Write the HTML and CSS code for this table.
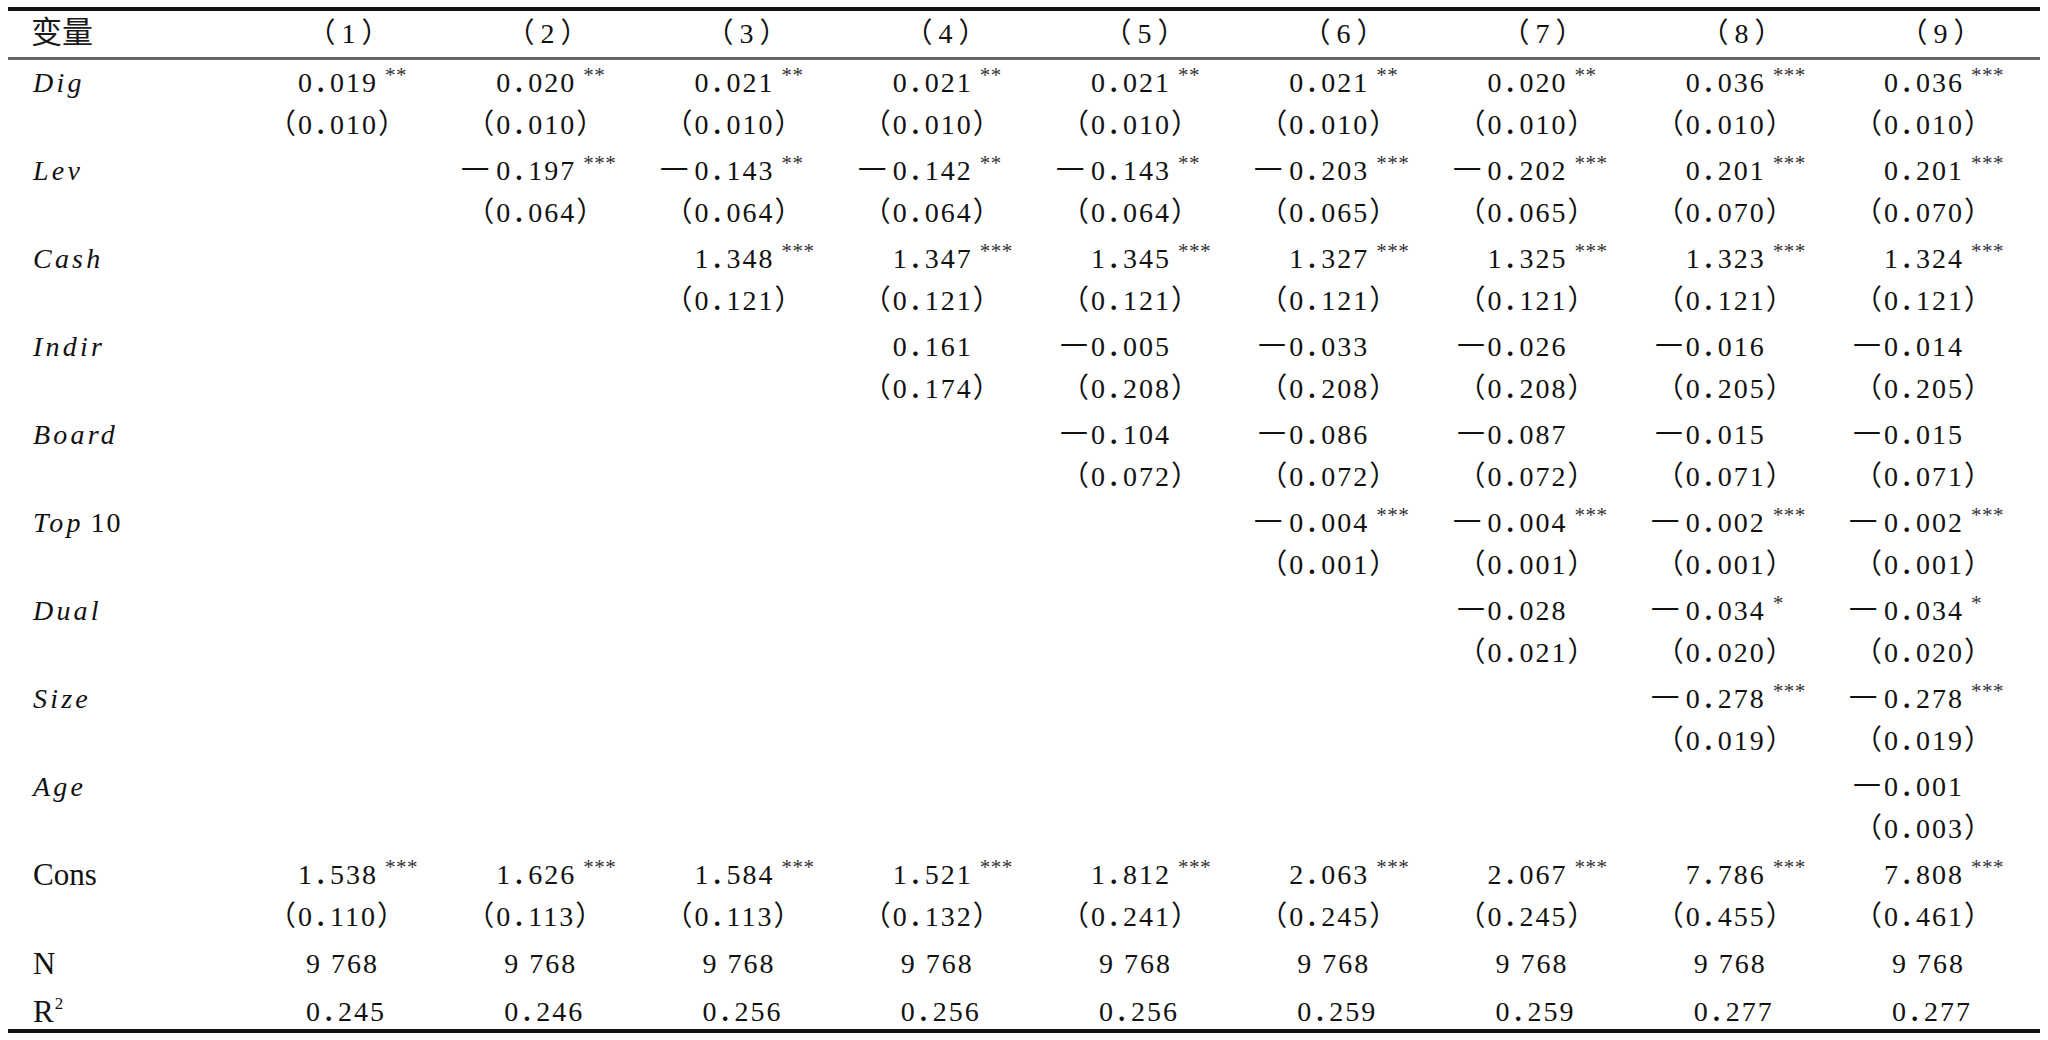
FILE: index.html
```html
<!DOCTYPE html>
<html lang="zh-CN">
<head>
<meta charset="utf-8">
<title>回归结果</title>
<link rel="stylesheet" href="styles.css">
</head>
<body>
<table class="reg">
<colgroup>
<col class="c-lab">
<col class="c-num"><col class="c-num"><col class="c-num"><col class="c-num"><col class="c-num"><col class="c-num"><col class="c-num"><col class="c-num"><col class="c-num">
</colgroup>
<thead>
<tr>
<th class="lab">变量</th>
<th>（1）</th><th>（2）</th><th>（3）</th><th>（4）</th><th>（5）</th><th>（6）</th><th>（7）</th><th>（8）</th><th>（9）</th>
</tr>
</thead>
<tbody>
<tr class="c">
<td class="lab"><i>Dig</i></td>
<td>0．019<sup>**</sup></td><td>0．020<sup>**</sup></td><td>0．021<sup>**</sup></td><td>0．021<sup>**</sup></td><td>0．021<sup>**</sup></td><td>0．021<sup>**</sup></td><td>0．020<sup>**</sup></td><td>0．036<sup>***</sup></td><td>0．036<sup>***</sup></td>
</tr>
<tr class="s">
<td class="lab"></td>
<td>（0．010）</td><td>（0．010）</td><td>（0．010）</td><td>（0．010）</td><td>（0．010）</td><td>（0．010）</td><td>（0．010）</td><td>（0．010）</td><td>（0．010）</td>
</tr>
<tr class="c">
<td class="lab"><i>Lev</i></td>
<td></td><td class="m"><span class="sg">－</span>0．197<sup>***</sup></td><td class="m"><span class="sg">－</span>0．143<sup>**</sup></td><td class="m"><span class="sg">－</span>0．142<sup>**</sup></td><td class="m"><span class="sg">－</span>0．143<sup>**</sup></td><td class="m"><span class="sg">－</span>0．203<sup>***</sup></td><td class="m"><span class="sg">－</span>0．202<sup>***</sup></td><td>0．201<sup>***</sup></td><td>0．201<sup>***</sup></td>
</tr>
<tr class="s">
<td class="lab"></td>
<td></td><td>（0．064）</td><td>（0．064）</td><td>（0．064）</td><td>（0．064）</td><td>（0．065）</td><td>（0．065）</td><td>（0．070）</td><td>（0．070）</td>
</tr>
<tr class="c">
<td class="lab"><i>Cash</i></td>
<td></td><td></td><td>1．348<sup>***</sup></td><td>1．347<sup>***</sup></td><td>1．345<sup>***</sup></td><td>1．327<sup>***</sup></td><td>1．325<sup>***</sup></td><td>1．323<sup>***</sup></td><td>1．324<sup>***</sup></td>
</tr>
<tr class="s">
<td class="lab"></td>
<td></td><td></td><td>（0．121）</td><td>（0．121）</td><td>（0．121）</td><td>（0．121）</td><td>（0．121）</td><td>（0．121）</td><td>（0．121）</td>
</tr>
<tr class="c">
<td class="lab"><i>Indir</i></td>
<td></td><td></td><td></td><td>0．161</td><td class="m"><span class="sg">－</span>0．005</td><td class="m"><span class="sg">－</span>0．033</td><td class="m"><span class="sg">－</span>0．026</td><td class="m"><span class="sg">－</span>0．016</td><td class="m"><span class="sg">－</span>0．014</td>
</tr>
<tr class="s">
<td class="lab"></td>
<td></td><td></td><td></td><td>（0．174）</td><td>（0．208）</td><td>（0．208）</td><td>（0．208）</td><td>（0．205）</td><td>（0．205）</td>
</tr>
<tr class="c">
<td class="lab"><i>Board</i></td>
<td></td><td></td><td></td><td></td><td class="m"><span class="sg">－</span>0．104</td><td class="m"><span class="sg">－</span>0．086</td><td class="m"><span class="sg">－</span>0．087</td><td class="m"><span class="sg">－</span>0．015</td><td class="m"><span class="sg">－</span>0．015</td>
</tr>
<tr class="s">
<td class="lab"></td>
<td></td><td></td><td></td><td></td><td>（0．072）</td><td>（0．072）</td><td>（0．072）</td><td>（0．071）</td><td>（0．071）</td>
</tr>
<tr class="c">
<td class="lab"><i class="tp">Top</i>10</td>
<td></td><td></td><td></td><td></td><td></td><td class="m"><span class="sg">－</span>0．004<sup>***</sup></td><td class="m"><span class="sg">－</span>0．004<sup>***</sup></td><td class="m"><span class="sg">－</span>0．002<sup>***</sup></td><td class="m"><span class="sg">－</span>0．002<sup>***</sup></td>
</tr>
<tr class="s">
<td class="lab"></td>
<td></td><td></td><td></td><td></td><td></td><td>（0．001）</td><td>（0．001）</td><td>（0．001）</td><td>（0．001）</td>
</tr>
<tr class="c">
<td class="lab"><i>Dual</i></td>
<td></td><td></td><td></td><td></td><td></td><td></td><td class="m"><span class="sg">－</span>0．028</td><td class="m"><span class="sg">－</span>0．034<sup>*</sup></td><td class="m"><span class="sg">－</span>0．034<sup>*</sup></td>
</tr>
<tr class="s">
<td class="lab"></td>
<td></td><td></td><td></td><td></td><td></td><td></td><td>（0．021）</td><td>（0．020）</td><td>（0．020）</td>
</tr>
<tr class="c">
<td class="lab"><i>Size</i></td>
<td></td><td></td><td></td><td></td><td></td><td></td><td></td><td class="m"><span class="sg">－</span>0．278<sup>***</sup></td><td class="m"><span class="sg">－</span>0．278<sup>***</sup></td>
</tr>
<tr class="s">
<td class="lab"></td>
<td></td><td></td><td></td><td></td><td></td><td></td><td></td><td>（0．019）</td><td>（0．019）</td>
</tr>
<tr class="c">
<td class="lab"><i>Age</i></td>
<td></td><td></td><td></td><td></td><td></td><td></td><td></td><td></td><td class="m"><span class="sg">－</span>0．001</td>
</tr>
<tr class="s">
<td class="lab"></td>
<td></td><td></td><td></td><td></td><td></td><td></td><td></td><td></td><td>（0．003）</td>
</tr>
<tr class="c">
<td class="lab up">Cons</td>
<td>1．538<sup>***</sup></td><td>1．626<sup>***</sup></td><td>1．584<sup>***</sup></td><td>1．521<sup>***</sup></td><td>1．812<sup>***</sup></td><td>2．063<sup>***</sup></td><td>2．067<sup>***</sup></td><td>7．786<sup>***</sup></td><td>7．808<sup>***</sup></td>
</tr>
<tr class="s">
<td class="lab"></td>
<td>（0．110）</td><td>（0．113）</td><td>（0．113）</td><td>（0．132）</td><td>（0．241）</td><td>（0．245）</td><td>（0．245）</td><td>（0．455）</td><td>（0．461）</td>
</tr>
<tr class="n">
<td class="lab up">N</td>
<td>9 768</td><td>9 768</td><td>9 768</td><td>9 768</td><td>9 768</td><td>9 768</td><td>9 768</td><td>9 768</td><td>9 768</td>
</tr>
<tr class="r">
<td class="lab up">R<sup class="pw">2</sup></td>
<td>0．245</td><td>0．246</td><td>0．256</td><td>0．256</td><td>0．256</td><td>0．259</td><td>0．259</td><td>0．277</td><td>0．277</td>
</tr>
</tbody>
</table>
</body>
</html>
```
FILE: styles.css
```css
html, body {
  margin: 0;
  padding: 0;
  background: #ffffff;
}

body {
  padding: 7px 8px 0;
  overflow: hidden;
}

.reg {
  width: 2032px;
  table-layout: fixed;
  border-collapse: separate;
  border-spacing: 0;
  border-top: 4px solid #111111;
  border-bottom: 4px solid #111111;
  font-family: "Liberation Serif", "Noto Sans CJK SC", serif;
  font-size: 28px;
  color: #111111;
  font-feature-settings: "halt" 1;
  text-spacing-trim: space-all;
}

.c-lab { width: 241px; }
.c-num { width: 199px; }

.reg th,
.reg td {
  padding: 0;
  white-space: nowrap;
  font-weight: normal;
}

/* header */
.reg thead th {
  line-height: 46px;
  border-bottom: 3px solid #666666;
  text-align: center;
  letter-spacing: 6px;
  padding-left: 6px;
}

.reg thead th.lab {
  text-align: left;
  font-family: "Noto Sans CJK SC", sans-serif;
  font-size: 31px;
  letter-spacing: 0;
  line-height: 37px;
  padding: 0 0 9px 23px;
  color: #1a1a1a;
}

/* body cells: numbers share one decimal position per column */
.reg tbody td { --x: 49px; }
.reg tbody td:nth-child(3) { --x: 48.25px; }
.reg tbody td:nth-child(4) { --x: 47.5px; }
.reg tbody td:nth-child(5) { --x: 46.75px; }
.reg tbody td:nth-child(6) { --x: 46px; }
.reg tbody td:nth-child(7) { --x: 45.25px; }
.reg tbody td:nth-child(8) { --x: 44.5px; }
.reg tbody td:nth-child(9) { --x: 43.75px; }
.reg tbody td:nth-child(10) { --x: 43px; }

.reg tbody td {
  text-align: left;
  padding-left: var(--x);
  letter-spacing: 2px;
}

.reg tbody td.lab {
  padding-left: 25px;
  letter-spacing: 2px;
}

.reg tbody td.lab i {
  letter-spacing: 3.2px;
}

.reg tbody td.lab i.tp {
  margin-right: 7px;
}

.reg tbody td.lab.up {
  font-size: 31px;
  letter-spacing: 0;
}

/* coefficient line and standard-error line */
.reg tr.c td {
  padding-top: 4px;
  padding-bottom: 2px;
  line-height: 38px;
}

.reg tr.s td {
  padding-top: 5px;
  padding-bottom: 7px;
  line-height: 32px;
  text-indent: -16px;
}

.reg tr.s td.lab {
  text-indent: 0;
}

.reg tr.n td {
  line-height: 48px;
}

.reg tr.n td:not(.lab) {
  padding-left: calc(var(--x) + 8px);
}

.reg tr.r td {
  padding-top: 7px;
  line-height: 34px;
}

.reg tr.r td:not(.lab) {
  padding-left: calc(var(--x) + 8px);
}

/* negative sign hangs to the left of the aligned digits */
.reg td.m {
  text-indent: -34px;
}

.reg .sg {
  display: inline-block;
  width: 34px;
  text-indent: 0;
  letter-spacing: 0;
  transform: scaleX(1.28);
  transform-origin: 17px 50%;
}

.reg td.m:not(:has(sup)) .sg {
  transform: scaleX(1.25);
  transform-origin: 2px 50%;
}

.reg sup {
  font-size: 21px;
  line-height: 0;
  vertical-align: 10px;
  margin-left: 7px;
  letter-spacing: 0.5px;
  color: #333333;
}

.reg sup.pw {
  font-size: 17px;
  vertical-align: 13px;
  margin-left: 1px;
  color: #111111;
}
```
